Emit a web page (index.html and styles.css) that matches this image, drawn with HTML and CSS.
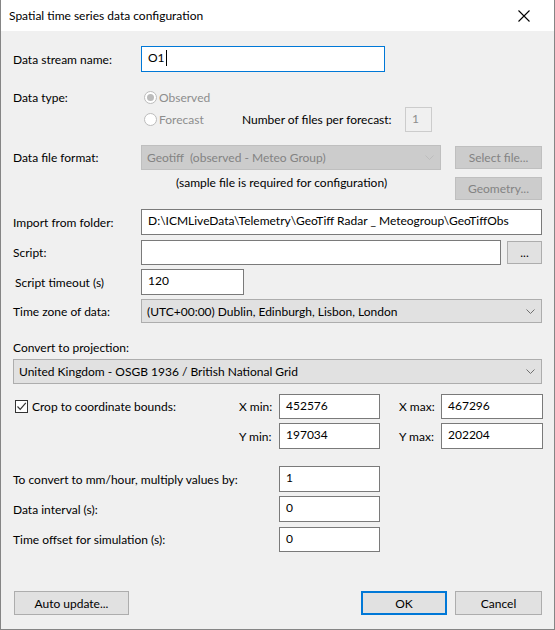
FILE: index.html
```html
<!DOCTYPE html>
<html>
<head>
<meta charset="utf-8">
<link rel="stylesheet" href="styles.css">
</head>
<body>
<div class="window">
  <div class="titlebar">
    <span class="title">Spatial time series data configuration</span>
    <svg class="close" width="12" height="12" viewBox="0 0 12 12"><path d="M0.5 0.5 L11.5 11.5 M11.5 0.5 L0.5 11.5" stroke="#000" stroke-width="1.1" fill="none"/></svg>
  </div>
  <div class="content">
    <div class="row r-name">
      <span class="lbl">Data stream name:</span>
      <div class="field focus w-name">O1<span class="caret"></span></div>
    </div>

    <div class="row r-obs">
      <span class="lbl">Data type:</span>
      <span class="radio checked"></span><span class="dis-text">Observed</span>
    </div>
    <div class="row r-fc">
      <span class="lbl"></span>
      <span class="radio"></span><span class="dis-text fc-text">Forecast</span>
      <span class="files-lbl">Number of files per forecast:</span>
      <div class="field disabled w-files">1</div>
    </div>

    <div class="row r-fmt">
      <span class="lbl">Data file format:</span>
      <div class="combo disabled w-fmt"><span>Geotiff&nbsp; (observed - Meteo Group)</span>
        <svg class="chev" width="9" height="5" viewBox="0 0 9 5"><path d="M0.5 0.5 L4.5 4.5 L8.5 0.5" stroke="#bdbdbd" fill="none"/></svg></div>
      <div class="btn disabled w-side">Select file...</div>
    </div>
    <div class="row r-sample">
      <span class="sample">(sample file is required for configuration)</span>
      <div class="btn disabled w-side">Geometry...</div>
    </div>

    <div class="row r-import">
      <span class="lbl">Import from folder:</span>
      <div class="field w-full">D:\ICMLiveData\Telemetry\GeoTiff Radar _ Meteogroup\GeoTiffObs</div>
    </div>
    <div class="row r-script">
      <span class="lbl">Script:</span>
      <div class="field w-script"></div>
      <div class="btn w-dots">...</div>
    </div>
    <div class="row r-timeout">
      <span class="lbl lbl-indent">Script timeout (s)</span>
      <div class="field w-timeout">120</div>
    </div>
    <div class="row r-tz">
      <span class="lbl">Time zone of data:</span>
      <div class="combo w-full"><span>(UTC+00:00) Dublin, Edinburgh, Lisbon, London</span>
        <svg class="chev" width="9" height="5" viewBox="0 0 9 5"><path d="M0.5 0.5 L4.5 4.5 L8.5 0.5" stroke="#707070" fill="none"/></svg></div>
    </div>

    <div class="row r-conv">
      <span class="plain">Convert to projection:</span>
    </div>
    <div class="row r-proj">
      <div class="combo w-all"><span>United Kingdom - OSGB 1936 / British National Grid</span>
        <svg class="chev" width="9" height="5" viewBox="0 0 9 5"><path d="M0.5 0.5 L4.5 4.5 L8.5 0.5" stroke="#707070" fill="none"/></svg></div>
    </div>

    <div class="row r-crop">
      <div class="crop">
        <span class="check"><svg width="11" height="11" viewBox="0 0 11 11"><path d="M1.5 5.5 L4.2 8.3 L9.8 1.8" stroke="#333" stroke-width="1.2" fill="none"/></svg></span>
        <span>Crop to coordinate bounds:</span>
      </div>
      <span class="coord-lbl c1">X min:</span>
      <div class="field w-coord">452576</div>
      <span class="coord-lbl c2">X max:</span>
      <div class="field w-coord2">467296</div>
    </div>
    <div class="row r-ycoord">
      <div class="crop"></div>
      <span class="coord-lbl c1">Y min:</span>
      <div class="field w-coord">197034</div>
      <span class="coord-lbl c2">Y max:</span>
      <div class="field w-coord2">202204</div>
    </div>

    <div class="row r-mult">
      <span class="lbl lbl-wide">To convert to mm/hour, multiply values by:</span>
      <div class="field w-coord">1</div>
    </div>
    <div class="row r-int">
      <span class="lbl lbl-wide">Data interval (s):</span>
      <div class="field w-coord">0</div>
    </div>
    <div class="row r-off">
      <span class="lbl lbl-wide">Time offset for simulation (s):</span>
      <div class="field w-coord">0</div>
    </div>

    <div class="row r-btns">
      <div class="btn w-auto">Auto update...</div>
      <div class="spacer"></div>
      <div class="btn default w-ok">OK</div>
      <div class="btn w-cancel">Cancel</div>
    </div>
  </div>
</div>
</body>
</html>
```

FILE: styles.css
```css
html, body {
  margin: 0;
  padding: 0;
  background: #f0f0f0;
}
body {
  font-family: "Lato", "Noto Sans", "Liberation Sans", sans-serif;
  font-size: 12px;
  color: #000;
}
.window {
  width: 555px;
  height: 630px;
  box-sizing: border-box;
  border: 1px solid #858585;
  border-top: none;
  background: #f0f0f0;
  display: flex;
  flex-direction: column;
}
.titlebar {
  height: 31px;
  background: #fff;
  display: flex;
  align-items: center;
  justify-content: space-between;
  padding: 0 24px 0 8px;
  flex: none;
}
.title {
  font-size: 12px;
  margin-top: -1px;
}
.close {
  display: block;
}
.content {
  padding: 0 12px 0 12px;
  display: flex;
  flex-direction: column;
}
.row {
  display: flex;
  align-items: center;
  flex: none;
}
.lbl {
  width: 128px;
  flex: none;
}
.lbl-indent {
  padding-left: 2px;
  box-sizing: border-box;
}
.lbl-wide {
  width: 266px;
}
.field {
  box-sizing: border-box;
  height: 100%;
  background: #fff;
  border: 1px solid #7a7a7a;
  padding: 3px 6px 0 6px;
  line-height: 16px;
  white-space: nowrap;
  overflow: hidden;
  flex: none;
}
.field.focus {
  border-color: #0078d7;
  display: flex;
  align-items: flex-start;
}
.caret {
  display: inline-block;
  width: 1px;
  height: 16px;
  background: #000;
  margin-left: 1px;
}
.field.disabled {
  background: #f0f0f0;
  border-color: #cccccc;
  color: #8d8d8d;
}
.combo {
  box-sizing: border-box;
  height: 100%;
  background: #e1e1e1;
  border: 1px solid #adadad;
  padding: 0 6px 0 5px;
  display: flex;
  align-items: center;
  justify-content: space-between;
  flex: none;
}
.combo.disabled {
  background: #cccccc;
  border-color: #bfbfbf;
  color: #838383;
}
.chev {
  display: block;
}
.btn {
  box-sizing: border-box;
  height: 100%;
  background: #e1e1e1;
  border: 1px solid #adadad;
  display: flex;
  align-items: center;
  justify-content: center;
  flex: none;
}
.btn.disabled {
  background: #cccccc;
  border-color: #bfbfbf;
  color: #838383;
}
.btn.default {
  border: 2px solid #0078d7;
}
.radio {
  box-sizing: border-box;
  width: 13px;
  height: 13px;
  border-radius: 50%;
  border: 1px solid #bcbcbc;
  background: #fff;
  margin-left: 3px;
  margin-right: 2px;
  flex: none;
  position: relative;
}
.radio.checked::after {
  content: "";
  position: absolute;
  left: 2px;
  top: 2px;
  width: 7px;
  height: 7px;
  border-radius: 50%;
  background: #bcbcbc;
}
.dis-text {
  color: #8d8d8d;
}
.fc-text {
  width: 83px;
}
.files-lbl {
  width: 163px;
}
.plain {
  display: block;
}
.sample {
  width: 442px;
  padding-left: 163px;
  box-sizing: border-box;
}
.crop {
  width: 226px;
  display: flex;
  align-items: center;
  flex: none;
}
.check {
  box-sizing: border-box;
  width: 13px;
  height: 13px;
  border: 1px solid #333;
  background: #fff;
  margin-left: 2px;
  margin-right: 4px;
  display: flex;
  align-items: center;
  justify-content: center;
}
.check svg { display: block; }
.coord-lbl {
  flex: none;
}
.c1 { width: 40px; }
.c2 { width: 42px; margin-left: 19px; }
.spacer { flex: 1; }

/* widths */
.w-name { width: 244px; }
.w-files { width: 27px; }
.w-fmt { width: 300px; }
.w-side { width: 87px; margin-left: 14px; }
.r-sample .w-side { margin-left: 0; }
.w-full { width: 401px; }
.w-script { width: 360px; }
.w-dots { width: 35px; margin-left: 6px; }
.w-timeout { width: 103px; }
.w-all { width: 529px; }
.w-coord { width: 101px; }
.w-coord2 { width: 102px; }
.w-auto { width: 115px; margin-left: 1px; }
.w-ok { width: 86px; }
.w-cancel { width: 87px; margin-left: 8px; }

/* row vertical geometry */
.r-name { margin-top: 15px; height: 26px; }
.r-obs { margin-top: 16px; height: 18px; }
.r-fc { margin-top: 1px; height: 25px; }
.r-fmt { margin-top: 13px; height: 25px; }
.r-sample { margin-top: 6px; height: 24px; align-items: stretch; }
.r-sample .btn { margin-top: 1px; height: 23px; }
.r-sample .sample { align-self: flex-start; margin-top: -1px; }
.r-fmt .btn { height: 23px; }
.r-import { margin-top: 9px; height: 26px; }
.r-script { margin-top: 5px; height: 25px; }
.r-script .btn { height: 23px; }
.r-timeout { margin-top: 4px; height: 26px; }
.r-tz { margin-top: 4px; height: 24px; }
.r-conv { margin-top: 16px; height: 16px; }
.r-proj { margin-top: 4px; height: 25px; }
.r-crop { margin-top: 10px; height: 25px; }
.r-ycoord { margin-top: 4px; height: 26px; }
.r-mult { margin-top: 17px; height: 26px; }
.r-int { margin-top: 4px; height: 26px; }
.r-off { margin-top: 5px; height: 25px; }
.r-btns { margin-top: 39px; height: 24px; }
```
